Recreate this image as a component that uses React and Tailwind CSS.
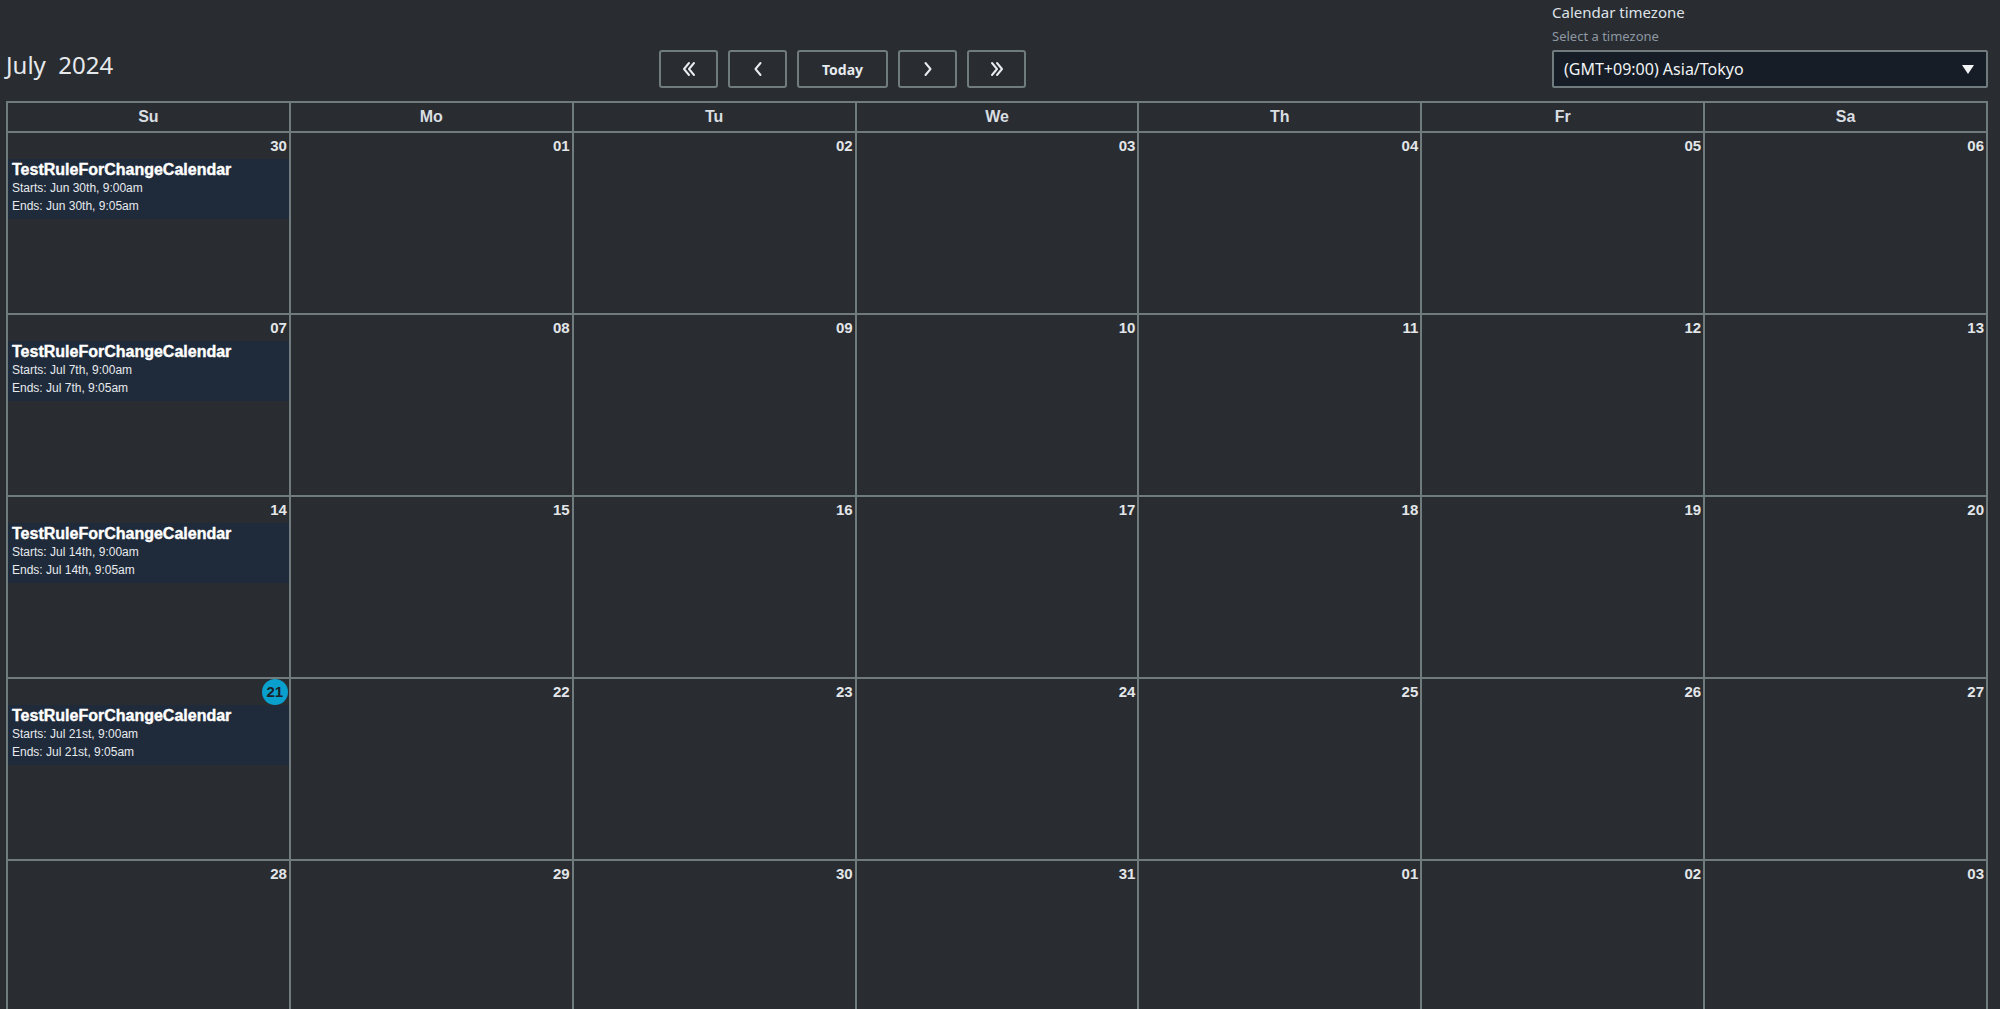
import React from 'react';

const days = ['Su', 'Mo', 'Tu', 'We', 'Th', 'Fr', 'Sa'];

const weeks = [
  ['30', '01', '02', '03', '04', '05', '06'],
  ['07', '08', '09', '10', '11', '12', '13'],
  ['14', '15', '16', '17', '18', '19', '20'],
  ['21', '22', '23', '24', '25', '26', '27'],
  ['28', '29', '30', '31', '01', '02', '03'],
];

// one event per Sunday, in the first four weeks
const events = [
  { starts: 'Jun 30th, 9:00am', ends: 'Jun 30th, 9:05am' },
  { starts: 'Jul 7th, 9:00am', ends: 'Jul 7th, 9:05am' },
  { starts: 'Jul 14th, 9:00am', ends: 'Jul 14th, 9:05am' },
  { starts: 'Jul 21st, 9:00am', ends: 'Jul 21st, 9:05am' },
];

const Chevron = ({ dir = 'left', double = false }) => (
  <svg width="18" height="18" viewBox="0 0 18 18" fill="none" stroke="#e8ecef" strokeWidth="2" strokeLinecap="round" strokeLinejoin="round">
    {dir === 'left' ? (
      double ? (
        <>
          <path d="M9 3 L4 9 L9 15" />
          <path d="M14 3 L9 9 L14 15" />
        </>
      ) : (
        <path d="M11.5 3 L6.5 9 L11.5 15" />
      )
    ) : double ? (
      <>
        <path d="M4 3 L9 9 L4 15" />
        <path d="M9 3 L14 9 L9 15" />
      </>
    ) : (
      <path d="M6.5 3 L11.5 9 L6.5 15" />
    )}
  </svg>
);

const NavButton = ({ children, wide = false }) => (
  <button
    className={`h-[38px] ${wide ? 'w-[91px]' : 'w-[59px]'} flex items-center justify-center rounded-[3px] border-2 border-[#6f7b7c] bg-transparent text-[14px] font-bold text-[#e6ebef]`}
    style={{ fontFamily: '"Noto Sans", "Open Sans", sans-serif' }}
  >
    {children}
  </button>
);

const DayCell = ({ num, event, today }) => (
  <div className="h-[182px] border-r-2 border-b-2 border-[#6f7b7c] flex flex-col">
    <div className="h-[26px] flex items-center justify-end pr-[1px]">
      {today ? (
        <span className="w-[26px] h-[26px] rounded-full bg-[#0aa0cd] flex items-center justify-center text-[15px] font-bold text-[#1c2127]">
          {num}
        </span>
      ) : (
        <span className="pr-[1px] text-[15px] font-bold text-[#e3e6e8]">{num}</span>
      )}
    </div>
    {event && (
      <div className="bg-[#1f2a3a] pl-[4px] pt-[2px] pb-[4px]">
        <div className="text-[16px] leading-[18px] font-bold text-white" style={{ WebkitTextStroke: '0.4px white' }}>
          TestRuleForChangeCalendar
        </div>
        <div className="text-[12px] leading-[18px] text-[#e7eaee]">Starts: {event.starts}</div>
        <div className="text-[12px] leading-[18px] text-[#e7eaee]">Ends: {event.ends}</div>
      </div>
    )}
  </div>
);

const App = () => {
  return (
    <div
      className="h-[1009px] overflow-hidden bg-[#292c31] pl-[6px] pr-[12px]"
      style={{ fontFamily: '"Liberation Sans", Arial, sans-serif' }}
    >
      {/* Toolbar */}
      <div className="flex items-end h-[88px]">
        <div
          className="w-[653px] mb-[7px] text-[24px] leading-[32px] text-[#e6e9ec]"
          style={{ fontFamily: '"Noto Sans", "Open Sans", sans-serif' }}
        >
          July&nbsp;&nbsp;2024
        </div>
        <div className="flex gap-[10px]">
          <NavButton><Chevron dir="left" double /></NavButton>
          <NavButton><Chevron dir="left" /></NavButton>
          <NavButton wide>Today</NavButton>
          <NavButton><Chevron dir="right" /></NavButton>
          <NavButton><Chevron dir="right" double /></NavButton>
        </div>
        <div
          className="ml-auto w-[436px] flex flex-col"
          style={{ fontFamily: '"Noto Sans", "Open Sans", sans-serif' }}
        >
          <div className="text-[15px] leading-[20px] text-[#dfe3e7] mt-[2px]">Calendar timezone</div>
          <div className="text-[13px] leading-[16px] text-[#8d98a3] mt-[6px]">Select a timezone</div>
          <div className="mt-[6px] h-[38px] rounded-[2px] border-2 border-[#6f7b7c] bg-[#161d26] flex items-center justify-between pl-[10px] pr-[12px]">
            <span className="text-[16px] text-[#f1f3f5]">(GMT+09:00) Asia/Tokyo</span>
            <svg width="12" height="9" viewBox="0 0 12 9">
              <path d="M0 0 H12 L6 9 Z" fill="#f1f3f5" />
            </svg>
          </div>
        </div>
      </div>

      {/* Calendar grid */}
      <div className="mt-[13px] w-[1982px] grid grid-cols-7 border-l-2 border-t-2 border-[#6f7b7c]">
        {days.map((d) => (
          <div
            key={d}
            className="h-[30px] border-r-2 border-b-2 border-[#6f7b7c] flex items-center justify-center text-[16px] font-bold text-[#d9dee2]"
          >
            {d}
          </div>
        ))}
        {weeks.map((week, wi) =>
          week.map((num, di) => (
            <DayCell
              key={`${wi}-${di}`}
              num={num}
              event={di === 0 ? events[wi] : null}
              today={wi === 3 && di === 0}
            />
          ))
        )}
      </div>
    </div>
  );
};

export default App;
